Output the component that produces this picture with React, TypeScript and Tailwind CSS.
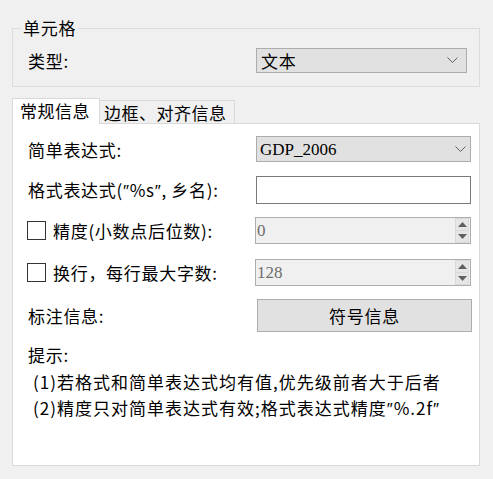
const cjk = "font-['Noto_Sans_CJK_SC','Microsoft_YaHei',sans-serif]"

function Q() {
  return <span className="font-['Liberation_Sans','DejaVu_Sans',sans-serif]">″</span>
}

function Chevron() {
  return (
    <svg width="11" height="7" viewBox="0 0 11 7" className="shrink-0">
      <polyline points="0.5,0.5 5.5,5.5 10.5,0.5" fill="none" stroke="#606060" strokeWidth="1" />
    </svg>
  )
}

function SpinBox({ value }: { value: string }) {
  return (
    <div className="w-[216px] h-[27px] border border-[#adadad] bg-[#f0f0f0] flex items-center">
      <span className="flex-1 pl-[1px] text-[17px] text-[#6d6d6d] font-['Liberation_Serif',serif] leading-none tracking-normal">{value}</span>
      <div className="flex flex-col w-[14px] h-[25px] mr-[1px]">
        <div className="flex-1 flex items-center justify-center border border-[#dadada] bg-[#e6e6e6]">
          <svg width="9" height="5" viewBox="0 0 9 5"><polygon points="0,5 4.5,0 9,5" fill="#606060" /></svg>
        </div>
        <div className="flex-1 flex items-center justify-center border border-t-0 border-[#dadada] bg-[#e6e6e6]">
          <svg width="9" height="5" viewBox="0 0 9 5"><polygon points="0,0 4.5,5 9,0" fill="#606060" /></svg>
        </div>
      </div>
    </div>
  )
}

function Check() {
  return <div className="w-[19px] h-[19px] border border-[#333333] bg-white shrink-0" />
}

export default function App() {
  return (
    <div className={`w-[493px] h-[479px] bg-[#f0f0f0] text-black overflow-hidden tracking-[0.7px] ${cjk}`}>
      <div className="h-[28px]" />
      {/* 单元格 group */}
      <div className="relative mx-[12px] w-[468px] h-[59px] border border-[#dcdcdc] flex items-start pt-[19px]">
        <span className="absolute left-[8px] -top-[13px] px-[2px] bg-[#f0f0f0] text-[17px] leading-[24px]">单元格</span>
        <span className="pl-[15px] w-[243px] text-[17px] leading-[25px]">类型:</span>
        <div className="w-[211px] h-[25px] border border-[#adadad] bg-[#e1e1e1] flex items-center justify-between pl-[4px] pr-[8px]">
          <span className="text-[17px] leading-none">文本</span>
          <Chevron />
        </div>
      </div>

      {/* tabs */}
      <div className="mt-[11px] ml-[12px] flex items-end h-[25px]">
        <div className="relative z-10 -mb-px w-[88px] h-[26px] bg-white border border-b-0 border-[#d9d9d9] flex items-start pl-[7px] text-[17px] leading-[24px] tracking-[0.5px]">
          常规信息
        </div>
        <div className="w-[135px] h-[23px] border-t border-r border-[#d9d9d9] flex items-center pl-[4px] text-[17px] leading-none whitespace-nowrap tracking-[0.5px]">
          边框、对齐信息
        </div>
      </div>

      {/* panel */}
      <div className="mx-[12px] w-[468px] h-[343px] bg-white border border-[#d9d9d9] pl-[15px] pt-[12px]">
        <div className="flex items-center h-[26px]">
          <span className="w-[228px] text-[17px] leading-none">简单表达式:</span>
          <div className="w-[215px] h-[26px] border border-[#adadad] bg-[#e1e1e1] flex items-center justify-between pl-[3px] pr-[4px]">
            <span className="text-[17px] font-['Liberation_Serif',serif] leading-none tracking-normal">GDP_2006</span>
            <Chevron />
          </div>
        </div>
        <div className="flex items-center h-[28px] mt-[14px]">
          <span className="w-[228px] text-[17px] leading-none whitespace-nowrap">
            格式表达式(<Q />%s<Q />, 乡名):
          </span>
          <div className="w-[215px] h-[28px] border border-[#7a7a7a] bg-white" />
        </div>
        <div className="flex items-center h-[27px] mt-[13px]">
          <div className="w-[228px] flex items-center -ml-[1px]">
            <Check />
            <span className="ml-[7px] text-[17px] leading-none whitespace-nowrap">精度(小数点后位数):</span>
          </div>
          <SpinBox value="0" />
        </div>
        <div className="flex items-center h-[27px] mt-[15px]">
          <div className="w-[228px] flex items-center -ml-[1px]">
            <Check />
            <span className="ml-[7px] text-[17px] leading-none whitespace-nowrap">换行，每行最大字数:</span>
          </div>
          <SpinBox value="128" />
        </div>
        <div className="flex items-center h-[33px] mt-[13px]">
          <span className="w-[229px] text-[17px] leading-none">标注信息:</span>
          <div className="w-[215px] h-[33px] border border-[#adadad] bg-[#e1e1e1] flex items-center justify-center text-[17px] leading-none">
            符号信息
          </div>
        </div>
        <div className="mt-[11px] text-[17px] leading-[24px]">提示:</div>
        <div className="mt-[2px] pl-[5px] text-[17px] leading-[26px] tracking-[1px] whitespace-nowrap">
          <div>(1)若格式和简单表达式均有值,优先级前者大于后者</div>
          <div>(2)精度只对简单表达式有效;格式表达式精度<Q />%.2f<Q /></div>
        </div>
      </div>
    </div>
  )
}
